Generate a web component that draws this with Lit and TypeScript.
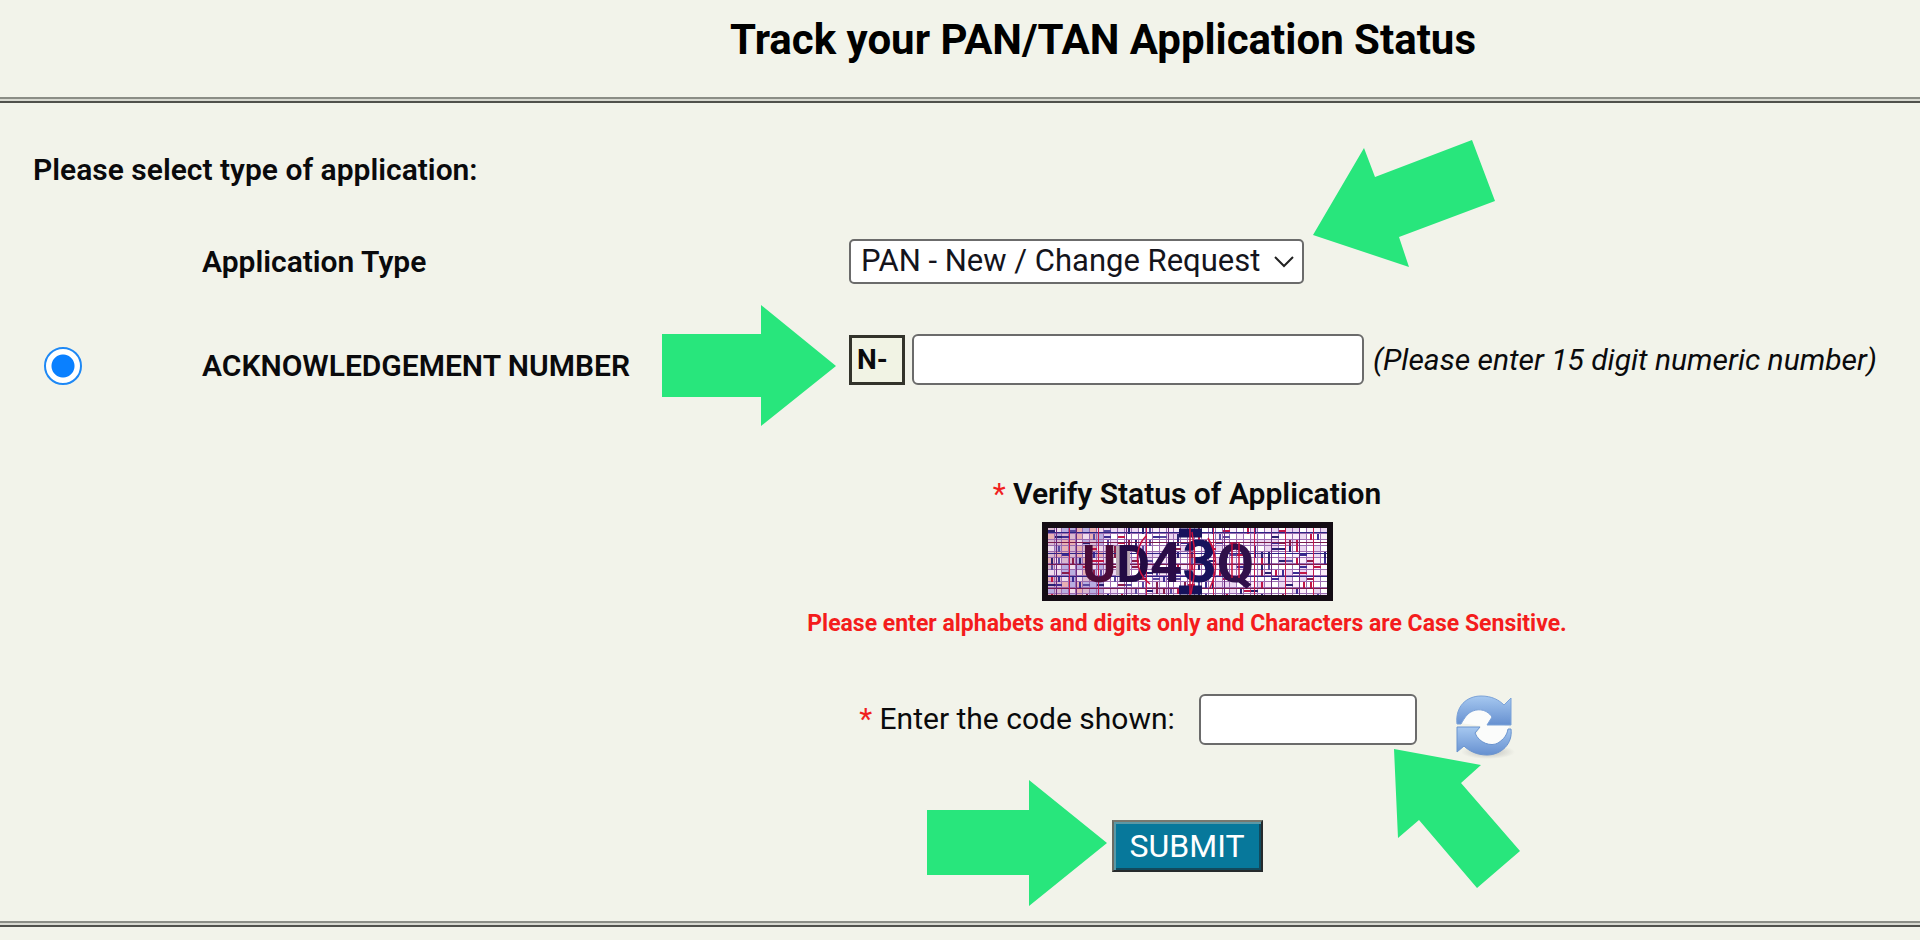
import { LitElement, html, css, svg } from "lit";
import { customElement, state } from "lit/decorators.js";

const GREEN = "#28e67c";

@customElement("pointer-arrow")
class PointerArrow extends LitElement {
  static properties = { points: { type: String }, w: { type: Number }, h: { type: Number } };
  static styles = css`
    :host { display: block; }
    svg { display: block; }
  `;
  declare points: string;
  declare w: number;
  declare h: number;
  render() {
    return html`<svg width=${this.w} height=${this.h} viewBox="0 0 ${this.w} ${this.h}" aria-hidden="true">
      <polygon points=${this.points} fill=${GREEN}></polygon>
    </svg>`;
  }
}

// Repeatable pseudo-random generator for the captcha noise.
function makeNoise(seed: number) {
  let s = seed;
  return () => {
    s = (s * 1103515245 + 12345) % 2147483648;
    return s / 2147483648;
  };
}

@customElement("captcha-picture")
class CaptchaPicture extends LitElement {
  static styles = css`
    :host { display: block; }
    svg { display: block; font-family: Roboto, sans-serif; font-weight: 700; }
  `;
  render() {
    const rnd = makeNoise(41);
    const inks = ["#2a2170", "#8a1c4a", "#3c2c92", "#c01848", "#5a4aa0"];
    const cells = [];
    for (let y = 6; y < 74; y += 6) {
      for (let x = 6; x < 285; x += 7) {
        const tints = x < 60 ? ["#d9b8d0", "#e8b0b4", "#b9aee0", "#f0dcec"] : ["#fff", "#fbeefa", "#ecd8f2", "#fff"];
        cells.push(svg`<rect x=${x} y=${y} width="6" height="5" fill=${tints[Math.floor(rnd() * 4)]}></rect>`);
        const pick = rnd();
        const ink = inks[Math.floor(rnd() * 5)];
        if (pick > 0.8) cells.push(svg`<rect x=${x} y=${y + 2} width="7" height="2" fill=${ink}></rect>`);
        else if (pick > 0.6) cells.push(svg`<rect x=${x + 3} y=${y} width="2" height="6" fill=${ink}></rect>`);
      }
    }
    const rows = [10, 20, 31, 42, 54, 66];
    const cols = [14, 27, 34, 56, 84, 104, 126, 171, 182, 212, 229, 243, 257, 271];
    return html`<svg width="291" height="79" viewBox="0 0 291 79" role="img" aria-label="Verification code">
      <rect width="291" height="79" fill="#9a6cb0"></rect>
      ${cells}
      ${rows.map((y, i) => svg`<rect x="6" y=${y} width="279" height="1" fill=${i % 2 ? "#7a1a4c" : "#2c2484"}></rect>`)}
      ${cols.map((x, i) => svg`<rect x=${x} y="6" width="1" height="67" fill=${i % 2 ? "#c41a4e" : "#6a2a80"}></rect>`)}
      <rect x="74" y="24" width="14" height="30" fill="#bba8b4"></rect>
      <path d="M137 11H160M137 68H160" fill="none" stroke="#17125c" stroke-width="9"></path>
      <text x="40" y="60" font-size="52"><tspan fill="#4a0c38">U</tspan><tspan fill="#220a44">D</tspan><tspan font-size="56" fill="#2a0c48">4</tspan><tspan font-size="60" fill="#17125c">3</tspan><tspan font-size="54" fill="#30104a">Q</tspan></text>
      <path d="M104 14C92 26 92 50 108 62M166 16Q180 40 168 66M148 6V73M150 10Q156 40 149 72M190 20V56M197 20V56" fill="none" stroke="#c8103c" stroke-width="1.5"></path>
      <rect x="3" y="3" width="285" height="73" fill="none" stroke="#140c14" stroke-width="6"></rect>
    </svg>`;
  }
}

@customElement("app-root")
class AppRoot extends LitElement {
  static styles = css`
    :host {
      display: block;
      box-sizing: border-box;
      min-height: 100vh;
      overflow: hidden;
      background: #f2f3ea;
      color: #0a0a0c;
      font: 400 30px/32px Roboto, sans-serif;
    }
    *, *::before { box-sizing: border-box; }
    h1 {
      margin: 0;
      padding: 16px 0 33px 286px;
      text-align: center;
      font: 700 42px/48px Roboto, sans-serif;
      color: #000;
    }
    .rule {
      margin: 0;
      height: 6px;
      border: solid;
      border-width: 2px 0;
      border-color: #8b8d86 transparent #50514c;
      background: #d8d9d1;
    }
    h2 { margin: 0; padding: 51px 33px 0; font: 600 30px/32px Roboto, sans-serif; }
    .row {
      display: grid;
      grid-template-columns: 202px 647px 1fr;
      align-items: center;
    }
    .type { margin-top: 53px; }
    .ack { margin-top: 50px; }
    label { font-weight: 600; }
    .field { position: relative; display: flex; align-items: center; white-space: nowrap; }
    .select { position: relative; }
    select, input[type="text"] {
      display: block;
      margin: 0;
      border: 2px solid #6b6b6b;
      border-radius: 6px;
      background: #fff;
      color: #14141c;
      outline: none;
    }
    select {
      appearance: none;
      width: 455px;
      height: 45px;
      padding: 0 0 2px 10px;
      border-radius: 5px;
      font: 400 31px/38px Roboto, sans-serif;
    }
    .chevron { position: absolute; right: 10px; top: 16px; pointer-events: none; }
    .ack input[type="radio"] {
      appearance: none;
      width: 38px;
      height: 38px;
      margin: 12px 0 0 44px;
      border: 2px solid #1e88f5;
      border-radius: 50%;
      background: radial-gradient(circle, #0a80ff 11px, #fff 12px);
    }
    .prefix {
      width: 56px;
      height: 50px;
      padding: 7px 5px;
      border: 3px solid #33332b;
      background: #f1f3e4;
      font-weight: 700;
      font-size: 28px;
      line-height: 30px;
    }
    .field .number { width: 452px; height: 51px; margin-left: 7px; }
    .hint { margin-left: 9px; font-style: italic; }
    .ack label { padding-top: 12px; }
    .verify {
      display: flex;
      flex-direction: column;
      align-items: center;
      margin: 93px 0 0 454px;
    }
    .star { color: #f02020; font-weight: 400; }
    .caption { font-weight: 600; margin-bottom: 12px; }
    .warning { margin: 8px 0 0; font: 700 23px/30px Roboto, sans-serif; color: #f41c1c; }
    .code { display: flex; align-items: center; margin-top: 40px; }
    .code label { font-weight: 400; }
    .entry { position: relative; margin-left: 24px; }
    .entry input { width: 218px; height: 51px; }
    .refresh { margin: 16px 0 0 38px; padding: 0; border: 0; background: none; line-height: 0; }
    .send { position: relative; margin-top: 61px; }
    .submit {
      display: block;
      width: 151px;
      height: 52px;
      padding: 0;
      border: 2px solid;
      border-color: #77786f #262a2c #262a2c #6a6b63;
      background: #07789b;
      box-shadow: inset 2px 2px #5b98a6, inset -2px -2px #12495c;
      color: #fff;
      font: 400 32px/38px Roboto, sans-serif;
    }
    pointer-arrow { position: absolute; pointer-events: none; }
    .to-select { left: 464px; top: -99px; }
    .to-number { left: -187px; top: -29px; }
    .to-code { left: 195px; top: 55px; }
    .to-submit { left: -185px; top: -40px; }
    .bottom { margin-top: 49px; }
  `;

  @state() private ackNumber = "";

  render() {
    return html`
      <h1>Track your PAN/TAN Application Status</h1>
      <hr class="rule" />
      <form @submit=${(e: Event) => e.preventDefault()}>
        <h2>Please select type of application:</h2>
        <div class="row type">
          <span></span>
          <label for="type">Application Type</label>
          <div class="field">
            <div class="select">
              <select id="type"><option>PAN - New / Change Request</option></select>
              <svg class="chevron" width="20" height="14" viewBox="0 0 20 14" aria-hidden="true">
                <path d="M1 2L10 11L19 2" fill="none" stroke="#222" stroke-width="2"></path>
              </svg>
              <pointer-arrow class="to-select" .w=${182} .h=${127}
                .points=${"0,95 51,8 62,37 159,0 182,61 86,97 96,127"}></pointer-arrow>
            </div>
          </div>
        </div>
        <div class="row ack">
          <input type="radio" id="ack" name="mode" checked />
          <label for="ack">ACKNOWLEDGEMENT NUMBER</label>
          <div class="field">
            <span class="prefix">N-</span>
            <input class="number" type="text" aria-label="Acknowledgement number" .value=${this.ackNumber}
              @input=${(e: Event) => (this.ackNumber = (e.target as HTMLInputElement).value)} />
            <span class="hint">(Please enter 15 digit numeric number)</span>
            <pointer-arrow class="to-number" .w=${174} .h=${121}
              .points=${"0,29 99,29 99,0 174,61 99,121 99,92 0,92"}></pointer-arrow>
          </div>
        </div>
        <div class="verify">
          <div class="caption"><span class="star">*</span> Verify Status of Application</div>
          <captcha-picture></captcha-picture>
          <p class="warning">Please enter alphabets and digits only and Characters are Case Sensitive.</p>
          <div class="code">
            <label for="code"><span class="star">*</span> Enter the code shown:</label>
            <div class="entry">
              <input type="text" id="code" />
              <pointer-arrow class="to-code" .w=${126} .h=${139}
                .points=${"0,0 87,16 67,34 126,102 83,139 25,71 4,89"}></pointer-arrow>
            </div>
            <button class="refresh" type="button" aria-label="Refresh code">
              <svg width="60" height="64" viewBox="0 0 60 64" aria-hidden="true">
                <defs>
                  <linearGradient id="blue" x1="0" y1="0" x2="0" y2="1">
                    <stop offset="0" stop-color="#a6c8f0"></stop>
                    <stop offset="1" stop-color="#6690d0"></stop>
                  </linearGradient>
                  <radialGradient id="shade">
                    <stop offset="0" stop-color="#999" stop-opacity=".6"></stop>
                    <stop offset="1" stop-color="#999" stop-opacity="0"></stop>
                  </radialGradient>
                </defs>
                <ellipse cx="33" cy="57" rx="27" ry="7" fill="url(#shade)"></ellipse>
                <path d="M5 28L14 14L34 12L50 31H54L52 48L34 52L20 42L26 31Z" fill="#fbfcfb"></path>
                <path d="M2 29C0 11 12 1 26 1C37 1 44 5 49 10L56 3V30H32L37 22C31 13 20 13 13 19C9 23 8 26 6 29Z" fill="url(#blue)" stroke="#7ba2d8"></path>
                <path d="M56 34C58 49 46 60 32 60C22 60 14 56 9 51L2 57V32H25L20 38C24 48 36 52 43 48C49 44 52 40 53 34Z" fill="url(#blue)" stroke="#6a94cf"></path>
              </svg>
            </button>
          </div>
          <div class="send">
            <button class="submit" type="submit">SUBMIT</button>
            <pointer-arrow class="to-submit" .w=${180} .h=${126}
              .points=${"0,30 102,30 102,0 180,63 102,126 102,95 0,95"}></pointer-arrow>
          </div>
        </div>
      </form>
      <hr class="rule bottom" />
    `;
  }
}
